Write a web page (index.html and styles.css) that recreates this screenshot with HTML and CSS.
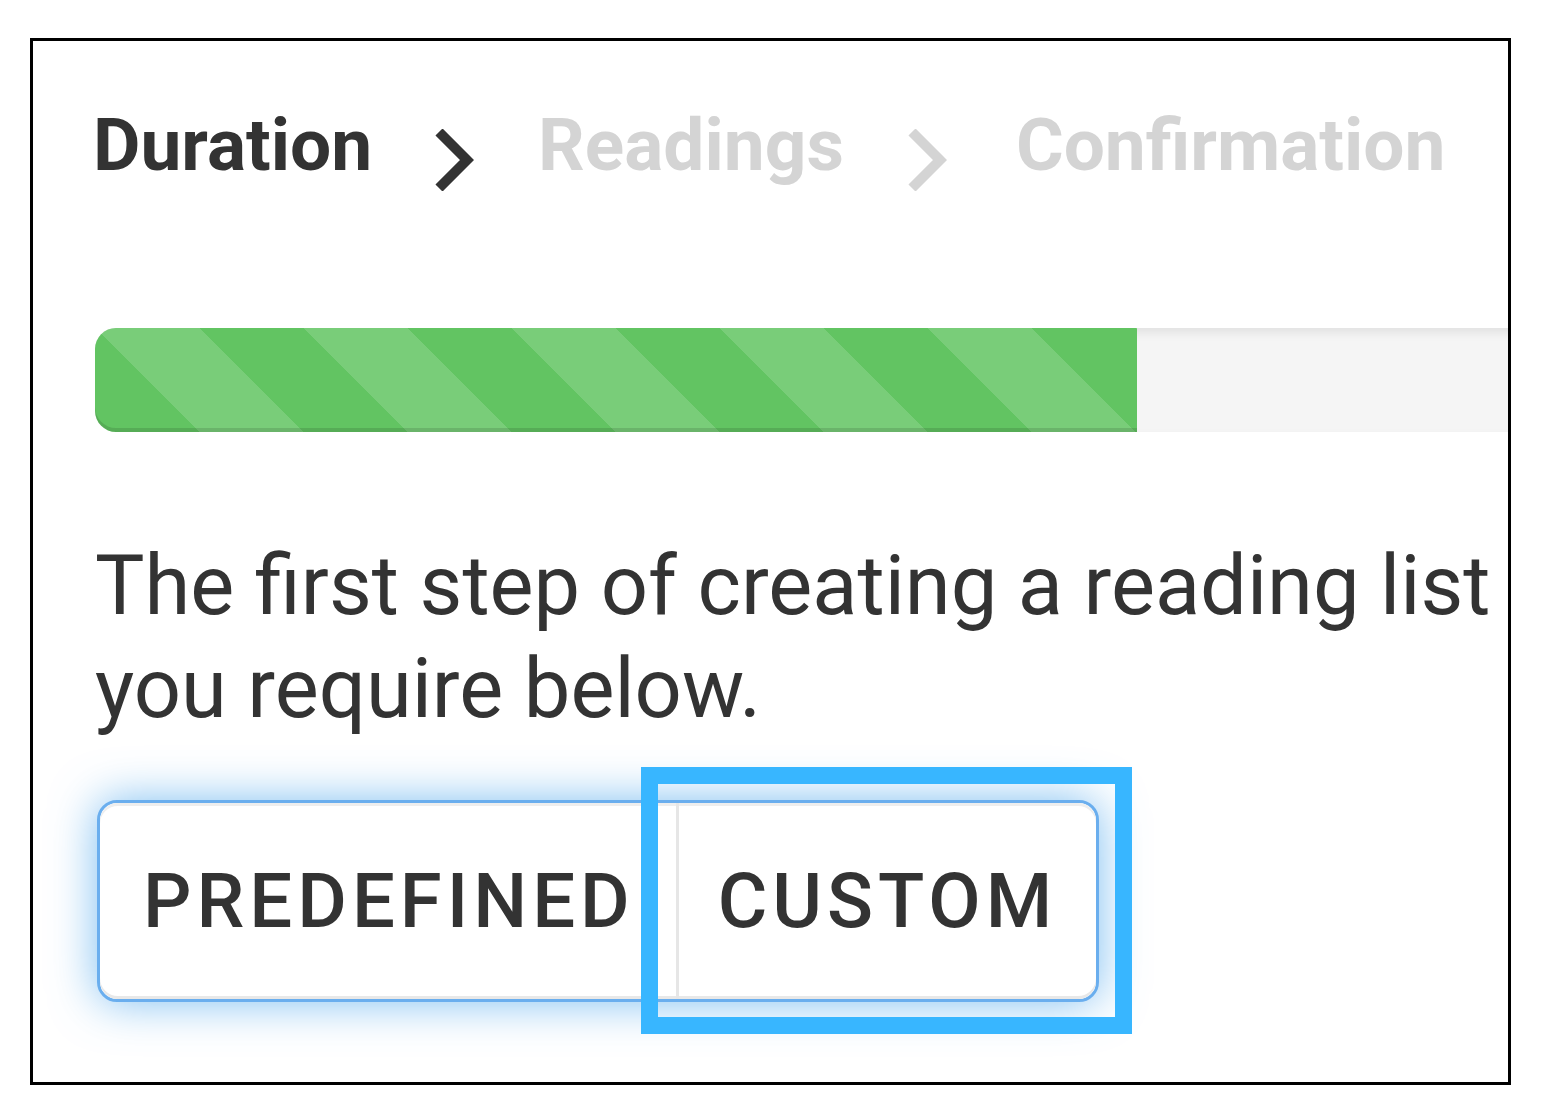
FILE: index.html
```html
<!DOCTYPE html>
<html>
  <head>
    <meta charset="UTF-8">
    <title>New Reading List</title>
    <link rel="stylesheet" href="styles.css">
  </head>
  <body>
    <div class="frame">
      <div class="wizard">
        <div class="steps">
          <span class="step active">Duration</span>
          <svg class="sep" width="40" height="62" viewBox="0 0 40 62"><polyline points="5,3 33,31 5,59"/></svg>
          <span class="step">Readings</span>
          <svg class="sep muted" width="40" height="62" viewBox="0 0 40 62"><polyline points="5,3 33,31 5,59"/></svg>
          <span class="step">Confirmation</span>
        </div>

        <div class="progress">
          <div class="bar" style="width: 1042px"></div>
        </div>

        <p class="intro">The first step of creating a reading list<br>you require below.</p>

        <div class="btn-group">
          <button class="btn">Predefined</button>
          <button class="btn">Custom</button>
          <span class="callout"></span>
        </div>
      </div>
    </div>
  </body>
</html>
```

FILE: styles.css
```css
body {
  margin: 0;
  background: #fff;
  font-family: Roboto, "Liberation Sans", sans-serif;
  color: #333;
}

.frame {
  margin: 38px 0 0 30px;
  width: 1475px;
  height: 1041px;
  border: 3px solid #000;
  overflow: hidden;
  background: #fff;
}

.wizard {
  width: 1800px;
  padding: 67px 0 0 62px;
}

/* step header */
.steps {
  display: flex;
  align-items: flex-start;
  margin-left: -2px;
}
.step {
  font-size: 73px;
  font-weight: 700;
  line-height: 74px;
  color: #d4d4d4;
}
.step.active {
  color: #333;
}
.sep {
  margin: 21px 64px 0 62px;
  fill: none;
  stroke: #333;
  stroke-width: 10;
}
.sep.muted {
  margin-left: 63px;
  margin-right: 69px;
  stroke: #d4d4d4;
}

/* progress bar */
.progress {
  margin-top: 137px;
  height: 104px;
  border-radius: 21px;
  background: #f5f5f5;
  box-shadow: inset 0 5px 10px rgba(0, 0, 0, 0.08);
}
.progress .bar {
  height: 100%;
  border-radius: 21px 0 0 21px;
  background-color: #62c462;
  background-image: linear-gradient(45deg,
    rgba(255, 255, 255, 0.15) 25%, transparent 25%,
    transparent 50%, rgba(255, 255, 255, 0.15) 50%,
    rgba(255, 255, 255, 0.15) 75%, transparent 75%, transparent);
  background-size: 208px 208px;
  box-shadow: inset 0 -4px 0 rgba(0, 0, 0, 0.12);
}

.intro {
  margin: 102px 0 0;
  font-size: 83px;
  line-height: 103px;
  color: #333;
}

/* duration type toggle */
.btn-group {
  position: relative;
  display: inline-flex;
  margin: 60px 0 0 2px;
  border: 3px solid #6aaeee;
  border-radius: 20px;
  box-shadow: 0 0 46px rgba(82, 168, 236, 0.75);
  background: #fff;
}
.btn {
  height: 196px;
  border: 0;
  background: none;
  font-family: Roboto, "Liberation Sans", sans-serif;
  font-size: 76px;
  font-weight: 500;
  letter-spacing: 5px;
  text-transform: uppercase;
  color: #333;
  box-shadow: inset 0 3px 0 #eee, inset 0 -3px 0 #e8e8e8;
}
.btn:first-child {
  padding: 0 41px 0 43px;
  border-radius: 18px 0 0 18px;
}
.btn:nth-child(2) {
  padding: 0 39px 0 39px;
  border-left: 3px solid #e6e6e6;
  border-radius: 0 18px 18px 0;
}

/* annotation box drawn over the Custom button */
.callout {
  position: absolute;
  left: 541px;
  top: -36px;
  width: 457px;
  height: 233px;
  border: 17px solid #38b6ff;
}
```
